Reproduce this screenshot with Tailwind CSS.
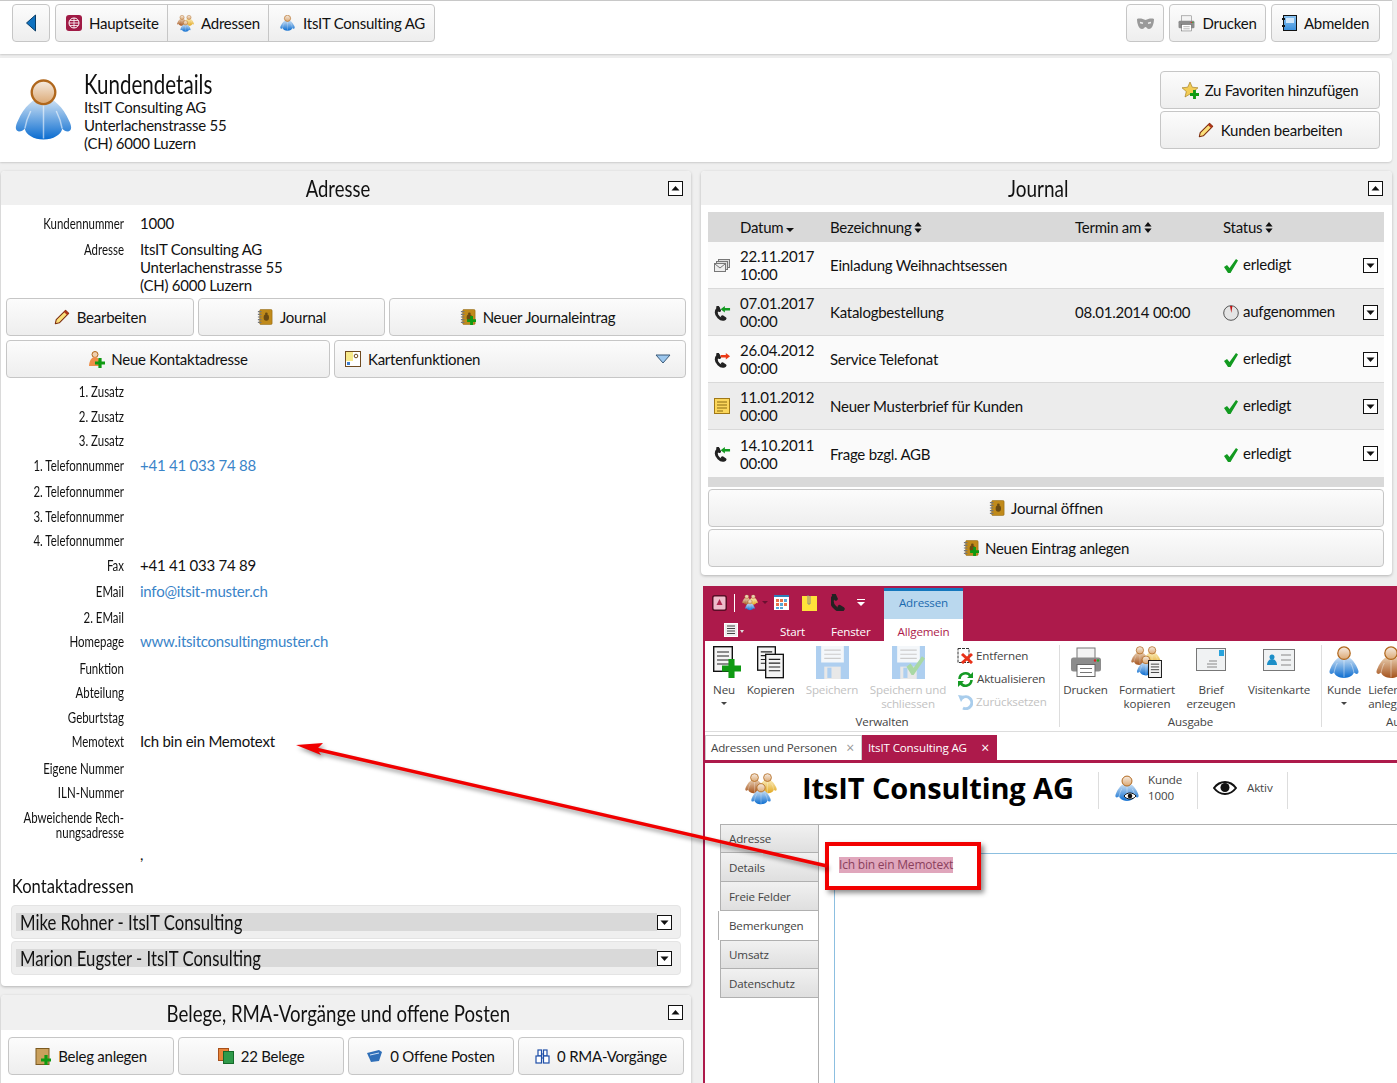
<!DOCTYPE html>
<html lang="de">
<head>
<meta charset="utf-8">
<title>Kundendetails</title>
<script src="https://cdn.jsdelivr.net/npm/@tailwindcss/browser@4"></script>
</head>
<body class="relative w-[1397px] h-[1083px] overflow-hidden bg-[#efefef] text-[#111] text-[15px] leading-[18px] tracking-[-0.24px] [font-family:Lato,'Liberation_Sans',sans-serif]">

<svg class="absolute w-0 h-0" aria-hidden="true">
  <defs>
    <linearGradient id="gBlue" x1="0" y1="0" x2="0" y2="1"><stop offset="0" stop-color="#d9e8f6"/><stop offset="1" stop-color="#0a6cd0"/></linearGradient>
    <linearGradient id="gBrown" x1="0" y1="0" x2="0" y2="1"><stop offset="0" stop-color="#ecd5b8"/><stop offset="1" stop-color="#a4521c"/></linearGradient>
    <linearGradient id="gYellow" x1="0" y1="0" x2="0" y2="1"><stop offset="0" stop-color="#fbeec0"/><stop offset="1" stop-color="#e2a820"/></linearGradient>
    <linearGradient id="gHead" x1="0" y1="0" x2="0" y2="1"><stop offset="0" stop-color="#f6ece2"/><stop offset="1" stop-color="#dba873"/></linearGradient>
    <linearGradient id="gDoor" x1="0" y1="0" x2="0" y2="1"><stop offset="0" stop-color="#8cc4f2"/><stop offset="1" stop-color="#3a8fdc"/></linearGradient>
    <symbol id="person" viewBox="-1 0 58 62">
      <path d="M28 18C38 18 48 28 54 42C57 48 57 52 53 53C50 53 48 51 47 50C46 56 38 61 28 61C18 61 10 56 9 50C8 51 6 53 3 53C-1 52-1 48 2 42C8 28 18 18 28 18Z"/>
      <path d="M28 26V60M15 32C12 38 10 44 9 50M41 32C44 38 46 44 47 50" fill="none" stroke="#fff" stroke-opacity=".55" stroke-width="1.5"/>
      <circle cx="28" cy="13" r="12" fill="url(#gHead)" stroke="#b0671c" stroke-width="2.4"/>
    </symbol>
    <symbol id="group" viewBox="0 0 32 32">
      <use href="#person" x="0" y="0" width="19" height="21" fill="url(#gBrown)"/>
      <use href="#person" x="13" y="0" width="19" height="21" fill="url(#gYellow)"/>
      <use href="#person" x="6" y="10" width="20" height="22" fill="url(#gBlue)"/>
    </symbol>
    <symbol id="plus" viewBox="0 0 10 10"><path d="M3.4 0h3.2v3.4H10v3.2H6.6V10H3.4V6.6H0V3.4h3.4z" fill="#0f9a12"/></symbol>
    <symbol id="book" viewBox="0 0 18 18">
      <rect x="3" y="0.5" width="14" height="17" rx="1.5" fill="#c08a1a" stroke="#8e6410" stroke-width=".6"/>
      <path d="M1 3h4M1 6h4M1 9h4M1 12h4M1 15h4" stroke="#777" stroke-width="1.4"/>
      <ellipse cx="10.5" cy="9.5" rx="3" ry="3.6" fill="#6a4a12"/><circle cx="10.5" cy="5.4" r="1.5" fill="#6a4a12"/>
    </symbol>
    <symbol id="bookplus" viewBox="0 0 18 18"><use href="#book" width="18" height="18"/><use href="#plus" x="8" y="8" width="10" height="10"/></symbol>
    <symbol id="pencil" viewBox="0 0 18 18">
      <path d="M13 1.5l3.5 3.5L6 15.5 1.5 16.5 2.5 12z" fill="#fbe07a" stroke="#7c2c0c" stroke-width="1.2" stroke-linejoin="round"/>
      <path d="M13 1.5l3.5 3.5-1.8 1.8-3.5-3.5z" fill="#b2351a"/>
    </symbol>
    <symbol id="check" viewBox="0 0 16 16"><path d="M1 9l3-2 2.5 3L13 1l2 1.5L7.5 15H5z" fill="#129a20"/></symbol>
    <symbol id="phone" viewBox="0 0 18 18"><path d="M5 2.500C2 6 2 10 5.500 13.500 8 16 10 17 12.500 15.500" fill="none" stroke="#222" stroke-width="3.400" stroke-linecap="round"/><path d="M4.500 1.500l2 4M10 13l3 2" stroke="#222" stroke-width="3.600" stroke-linecap="round"/></symbol>
    <symbol id="phonein" viewBox="0 0 18 18"><use href="#phone" width="16" height="16" y="2"/><path d="M7 5.500l4.500-3.500v2.200H17v2.600h-5.500V9z" fill="#129a20"/></symbol>
    <symbol id="phoneout" viewBox="0 0 18 18"><use href="#phone" width="16" height="16" y="2"/><path d="M17 5.500L12.500 2v2.200H7v2.600h5.500V9z" fill="#ec3a16"/></symbol>
    <symbol id="printer" viewBox="0 0 32 32">
      <rect x="7" y="1.5" width="18" height="11" fill="#f4f4f4" stroke="#777"/>
      <rect x="1" y="11" width="30" height="14" rx="2.5" fill="#8c8c8c"/>
      <rect x="7" y="18" width="18" height="12" fill="#fff" stroke="#666"/>
      <path d="M10 22h12M10 26h12" stroke="#777"/>
      <circle cx="25" cy="14" r="1.2" fill="#d22"/><circle cx="28" cy="14" r="1.2" fill="#2a2"/>
    </symbol>
    <symbol id="doc" viewBox="0 0 20 26">
      <rect x=".7" y=".7" width="18.6" height="24.6" fill="#f4f4f4" stroke="#111" stroke-width="1.4"/>
      <path d="M4 6h12M4 10h12M4 14h12M4 18h12" stroke="#222" stroke-width="1.2"/>
    </symbol>
    <symbol id="floppy" viewBox="0 0 32 32">
      <path d="M0 0h32v32H0z" fill="#aecff0"/><rect x="5" y="0" width="22" height="16" fill="#f4f7fa"/>
      <path d="M8 4h16M8 8h16M8 12h16" stroke="#ccc"/><rect x="8" y="20" width="16" height="12" fill="#e8e8e8"/><rect x="11" y="21" width="4" height="10" fill="#aecff0"/>
    </symbol>
    <symbol id="tri-up" viewBox="0 0 15 15"><rect x=".5" y=".5" width="14" height="14" fill="#fff" stroke="#111"/><path d="M3.5 9.5L7.5 5l4 4.5z" fill="#111"/></symbol>
    <symbol id="tri-dn" viewBox="0 0 15 15"><rect x=".5" y=".5" width="14" height="14" fill="#fff" stroke="#111"/><path d="M3.5 5.5L7.5 10l4-4.5z" fill="#111"/></symbol>
    <symbol id="sort" viewBox="0 0 8 11"><path d="M4 0l3.600 4.400H.4zM4 11L.4 6.600h7.200z" fill="#111"/></symbol>
  </defs>
</svg>

<!-- top bar -->
<header class="h-[54px] w-[1392px] bg-white border-t border-[#c8c8c8] rounded-br-[4px] shadow-[0_1px_2px_rgba(0,0,0,.15)] flex items-start pt-[3px] pl-[12px] pr-[12px]">
  <button class="w-[38px] h-[38px] flex items-center justify-center border border-[#c6c6c6] rounded-[4px] bg-linear-to-b from-[#fcfcfc] to-[#eeeeee]">
    <svg class="w-[12px] h-[18px]" viewBox="0 0 12 18"><path d="M10.500 1L1.500 9l9 8z" fill="#0f72c0" stroke="#0a3d66"/></svg>
  </button>
  <nav class="ml-[5px] h-[38px] flex border border-[#c6c6c6] rounded-[4px] bg-linear-to-b from-[#fcfcfc] to-[#eeeeee]">
    <a class="w-[112px] flex items-center pl-[10px] gap-[7px] border-r border-[#c6c6c6]">
      <svg class="w-[16px] h-[16px]" viewBox="0 0 16 16"><rect width="16" height="16" rx="3" fill="#a01a45"/><circle cx="8" cy="8" r="5" fill="none" stroke="#fff"/><path d="M3 8h10M8 3v10M4 5.500h8M4 10.500h8" stroke="#fff" stroke-width=".8"/></svg>
      Hauptseite
    </a>
    <a class="w-[101px] flex items-center pl-[9px] gap-[7px] border-r border-[#c6c6c6]">
      <svg class="w-[17px] h-[17px]"><use href="#group"/></svg>
      Adressen
    </a>
    <a class="w-[165px] flex items-center pl-[11px] gap-[8px]">
      <svg class="w-[15px] h-[16px]" fill="url(#gBlue)"><use href="#person"/></svg>
      ItsIT Consulting AG
    </a>
  </nav>
  <div class="ml-auto flex gap-[5px]">
    <button class="w-[38px] h-[38px] flex items-center justify-center border border-[#c6c6c6] rounded-[4px] bg-linear-to-b from-[#fcfcfc] to-[#eeeeee]">
      <svg class="w-[17px] h-[11px]" viewBox="0 0 17 11"><path d="M0 1c3-1 6 0 8.500 1 2.500-1 5.500-2 8.500-1 0 5-2 10-5 10-2 0-2.500-2-3.500-2S7 11 5 11C2 11 0 6 0 1z" fill="#9a9a9a"/><path d="M3 4.500l3 .8M14 4.500l-3 .8" stroke="#eee" stroke-width="1.400"/></svg>
    </button>
    <button class="w-[97px] h-[38px] flex items-center justify-center gap-[7px] border border-[#c6c6c6] rounded-[4px] bg-linear-to-b from-[#fcfcfc] to-[#eeeeee]">
      <svg class="w-[17px] h-[17px]"><use href="#printer"/></svg>Drucken
    </button>
    <button class="w-[109px] h-[38px] flex items-center justify-center gap-[7px] border border-[#c6c6c6] rounded-[4px] bg-linear-to-b from-[#fcfcfc] to-[#eeeeee]">
      <svg class="w-[15px] h-[16px]" viewBox="0 0 15 16"><rect x="1.500" y=".5" width="13" height="15" fill="url(#gDoor)" stroke="#111"/><rect x="4" y="3" width="8" height="5" fill="#cfe6fa"/><path d="M0 4h3M0 11h3" stroke="#111" stroke-width="2"/></svg>Abmelden
    </button>
  </div>
</header>

<!-- Kundendetails -->
<section class="mt-[4px] h-[104px] w-[1392px] bg-white rounded-r-[4px] shadow-[0_1px_2px_rgba(0,0,0,.15)] flex pl-[15px] pr-[12px]">
  <svg class="w-[57px] h-[62px] mt-[21px]" fill="url(#gBlue)"><use href="#person"/></svg>
  <div class="ml-[12px] mt-[13px]">
    <h1 class="text-[26px] leading-[27px] tracking-normal origin-left [transform:scaleX(.79)] whitespace-nowrap">Kundendetails</h1>
    <p>ItsIT Consulting AG</p>
    <p>Unterlachenstrasse 55</p>
    <p>(CH) 6000 Luzern</p>
  </div>
  <div class="ml-auto mt-[13px] flex flex-col gap-[2px]">
    <button class="w-[220px] h-[38px] flex items-center justify-center gap-[6px] border border-[#c6c6c6] rounded-[4px] bg-linear-to-b from-[#fcfcfc] to-[#eeeeee]">
      <svg class="w-[17px] h-[17px]" viewBox="0 0 17 17"><path d="M8 0l2.300 5.200 5.700.6-4.300 3.700 1.300 5.500L8 12.100 3 15l1.300-5.500L0 5.800l5.700-.6z" fill="#f2cc55" stroke="#9a7416" stroke-width=".6"/><use href="#plus" x="8" y="8" width="9" height="9"/></svg>
      Zu Favoriten hinzufügen
    </button>
    <button class="w-[220px] h-[38px] flex items-center justify-center gap-[7px] border border-[#c6c6c6] rounded-[4px] bg-linear-to-b from-[#fcfcfc] to-[#eeeeee]">
      <svg class="w-[16px] h-[16px]"><use href="#pencil"/></svg>
      Kunden bearbeiten
    </button>
  </div>
</section>

<!-- Panels -->
<main class="mt-[9px] flex gap-[10px] pl-[1px]">
  <!-- left column -->
  <div class="w-[690px] flex flex-col gap-[9px]">
    <section class="bg-white rounded-[4px] shadow-[0_1px_3px_rgba(0,0,0,.25)] pb-[11px]">
      <div class="relative h-[34px] bg-[#f0f0f0] flex items-center justify-center pr-[16px] rounded-t-[4px] text-[24px] tracking-normal">
        <span class="[transform:scaleX(.77)]">Adresse</span>
        <svg class="absolute right-[8px] top-[10px] w-[15px] h-[15px]"><use href="#tri-up"/></svg>
      </div>
      <dl class="pt-[10px] [&_dt]:w-[123px] [&_dt]:text-right [&_dt]:text-[14.500px] [&_dt]:tracking-normal [&_dt]:whitespace-nowrap [&_dt]:origin-right [&_dt]:[transform:scaleX(.79)] [&_dd]:ml-[16px] [&_dd]:-mt-[1px]">
        <div class="flex h-[26px]"><dt>Kundennummer</dt><dd>1000</dd></div>
        <div class="flex h-[57px]"><dt>Adresse</dt><dd>ItsIT Consulting AG<br>Unterlachenstrasse 55<br>(CH) 6000 Luzern</dd></div>
      </dl>
      <div class="px-[5px] flex gap-[4px]">
        <button class="w-[188px] h-[38px] flex items-center justify-center gap-[7px] border border-[#c6c6c6] rounded-[4px] bg-linear-to-b from-[#fcfcfc] to-[#eeeeee]"><svg class="w-[16px] h-[16px]"><use href="#pencil"/></svg>Bearbeiten</button>
        <button class="w-[187px] h-[38px] flex items-center justify-center gap-[7px] border border-[#c6c6c6] rounded-[4px] bg-linear-to-b from-[#fcfcfc] to-[#eeeeee]"><svg class="w-[16px] h-[16px]"><use href="#book"/></svg>Journal</button>
        <button class="w-[297px] h-[38px] flex items-center justify-center gap-[7px] border border-[#c6c6c6] rounded-[4px] bg-linear-to-b from-[#fcfcfc] to-[#eeeeee]"><svg class="w-[16px] h-[16px]"><use href="#bookplus"/></svg>Neuer Journaleintrag</button>
      </div>
      <div class="mt-[4px] px-[5px] flex gap-[4px]">
        <button class="w-[324px] h-[38px] flex items-center justify-center gap-[6px] border border-[#c6c6c6] rounded-[4px] bg-linear-to-b from-[#fcfcfc] to-[#eeeeee]">
          <svg class="w-[17px] h-[17px]" viewBox="0 0 17 17"><circle cx="7" cy="3.500" r="3" fill="#f0d0b0" stroke="#b0671c"/><path d="M7 6c4 0 5 5 5 9H1c0-4 2-9 6-9z" fill="#ef8f4a"/><use href="#plus" x="7" y="7" width="10" height="10"/></svg>
          Neue Kontaktadresse
        </button>
        <button class="w-[352px] h-[38px] flex items-center pl-[10px] pr-[14px] gap-[7px] border border-[#c6c6c6] rounded-[4px] bg-linear-to-b from-[#fcfcfc] to-[#eeeeee]">
          <svg class="w-[16px] h-[16px]" viewBox="0 0 16 16"><rect x=".5" y=".5" width="15" height="15" fill="#fff" stroke="#6e4a20"/><path d="M1 1h7v9H1z" fill="#f7e98a"/><rect x="2" y="11" width="3" height="3" fill="#3f7fd0"/><circle cx="11" cy="5" r="1.800" fill="none" stroke="#6e4a20"/></svg>
          Kartenfunktionen
          <svg class="ml-auto w-[16px] h-[10px]" viewBox="0 0 16 10"><path d="M1 1h14L8 9z" fill="#9cc7ee" stroke="#3a5a78"/></svg>
        </button>
      </div>
      <dl class="mt-[5px] [&_dt]:w-[123px] [&_dt]:shrink-0 [&_dt]:text-right [&_dt]:text-[14.500px] [&_dt]:tracking-normal [&_dt]:whitespace-nowrap [&_dt]:origin-right [&_dt]:[transform:scaleX(.79)] [&_dd]:ml-[16px] [&_dd]:-mt-[1px]">
        <div class="flex h-[25px]"><dt>1. Zusatz</dt></div>
        <div class="flex h-[24px]"><dt>2. Zusatz</dt></div>
        <div class="flex h-[25px]"><dt>3. Zusatz</dt></div>
        <div class="flex h-[26px]"><dt>1. Telefonnummer</dt><dd class="text-[#3a84c8]">+41 41 033 74 88</dd></div>
        <div class="flex h-[25px]"><dt>2. Telefonnummer</dt></div>
        <div class="flex h-[24px]"><dt>3. Telefonnummer</dt></div>
        <div class="flex h-[25px]"><dt>4. Telefonnummer</dt></div>
        <div class="flex h-[26px]"><dt>Fax</dt><dd>+41 41 033 74 89</dd></div>
        <div class="flex h-[26px]"><dt>EMail</dt><dd class="text-[#3a84c8]">info@itsit-muster.ch</dd></div>
        <div class="flex h-[24px]"><dt>2. EMail</dt></div>
        <div class="flex h-[27px]"><dt>Homepage</dt><dd class="text-[#3a84c8]">www.itsitconsultingmuster.ch</dd></div>
        <div class="flex h-[24px]"><dt>Funktion</dt></div>
        <div class="flex h-[25px]"><dt>Abteilung</dt></div>
        <div class="flex h-[24px]"><dt>Geburtstag</dt></div>
        <div class="flex h-[27px]"><dt>Memotext</dt><dd>Ich bin ein Memotext</dd></div>
        <div class="flex h-[24px]"><dt>Eigene Nummer</dt></div>
        <div class="flex h-[25px]"><dt>ILN-Nummer</dt></div>
        <div class="flex h-[39px] leading-[15px] pt-[1px]"><dt><span class="block w-[132px] -ml-[9px]">Abweichende Rech-<br>nungsadresse</span></dt></div>
        <div class="flex h-[26px]"><dt></dt><dd class="-translate-y-[2px]">,</dd></div>
      </dl>
      <h2 class="h-[31px] pl-[13px] text-[20px] leading-[22px] tracking-normal origin-left [transform:scaleX(.83)] whitespace-nowrap">Kontaktadressen</h2>
      <div class="mx-[10px] h-[34px] bg-[#efefef] rounded-[4px] border border-[#e4e4e4] flex items-center pl-[4px] pr-[8px] text-[22px] tracking-normal">
        <span class="flex-1 h-[18px] bg-[#d9d9d9] pl-[4px] leading-[18px]"><span class="inline-block origin-left [transform:scaleX(.76)] whitespace-nowrap">Mike Rohner - ItsIT Consulting</span></span>
        <svg class="w-[15px] h-[15px]"><use href="#tri-dn"/></svg>
      </div>
      <div class="mt-[2px] mx-[10px] h-[34px] bg-[#efefef] rounded-[4px] border border-[#e4e4e4] flex items-center pl-[4px] pr-[8px] text-[22px] tracking-normal">
        <span class="flex-1 h-[18px] bg-[#d9d9d9] pl-[4px] leading-[18px]"><span class="inline-block origin-left [transform:scaleX(.76)] whitespace-nowrap">Marion Eugster - ItsIT Consulting</span></span>
        <svg class="w-[15px] h-[15px]"><use href="#tri-dn"/></svg>
      </div>
    </section>
    <section class="bg-white rounded-[4px] shadow-[0_1px_3px_rgba(0,0,0,.25)] h-[100px]">
      <div class="relative h-[35px] bg-[#f0f0f0] flex items-center justify-center pr-[16px] rounded-t-[4px] text-[24px] tracking-normal">
        <span class="[transform:scaleX(.776)] whitespace-nowrap">Belege, RMA-Vorgänge und offene Posten</span>
        <svg class="absolute right-[8px] top-[10px] w-[15px] h-[15px]"><use href="#tri-up"/></svg>
      </div>
      <div class="mt-[7px] pl-[7px] flex gap-[4px]">
        <button class="w-[166px] h-[38px] flex items-center justify-center gap-[7px] border border-[#c6c6c6] rounded-[4px] bg-linear-to-b from-[#fcfcfc] to-[#eeeeee]">
          <svg class="w-[16px] h-[17px]" viewBox="0 0 16 17"><rect x="1" y=".5" width="13" height="16" fill="#c9a05c" stroke="#7c5a20"/><use href="#plus" x="6" y="7" width="10" height="10"/></svg>Beleg anlegen
        </button>
        <button class="w-[166px] h-[38px] flex items-center justify-center gap-[7px] border border-[#c6c6c6] rounded-[4px] bg-linear-to-b from-[#fcfcfc] to-[#eeeeee]">
          <svg class="w-[16px] h-[16px]" viewBox="0 0 16 16"><rect x=".5" y=".5" width="10" height="12" fill="#e8853a" stroke="#a8501a"/><rect x="5.500" y="3.500" width="10" height="12" fill="#2f9a4a" stroke="#156a2a"/></svg>22 Belege
        </button>
        <button class="w-[166px] h-[38px] flex items-center justify-center gap-[7px] border border-[#c6c6c6] rounded-[4px] bg-linear-to-b from-[#fcfcfc] to-[#eeeeee]">
          <svg class="w-[16px] h-[12px]" viewBox="0 0 16 12"><path d="M0 3l12-3 3 2-3 9-8 1z" fill="#2f6fb8"/><path d="M3 5l9-2" stroke="#cfe2f6"/></svg>0 Offene Posten
        </button>
        <button class="w-[166px] h-[38px] flex items-center justify-center gap-[7px] border border-[#c6c6c6] rounded-[4px] bg-linear-to-b from-[#fcfcfc] to-[#eeeeee]">
          <svg class="w-[15px] h-[15px]" viewBox="0 0 15 15" fill="#fff" stroke="#1f4fa8" stroke-width="1.200"><rect x="3" y="1" width="3.500" height="6"/><rect x="8.500" y="1" width="3.500" height="6"/><rect x="1" y="7" width="5.500" height="7"/><rect x="8.500" y="7" width="5.500" height="7"/><path d="M6.500 5h2M6.500 9h2"/></svg>0 RMA-Vorgänge
        </button>
      </div>
    </section>
  </div>

  <!-- right column -->
  <div class="w-[691px] shrink-0">
    <section class="h-[404px] bg-white rounded-[4px] shadow-[0_1px_3px_rgba(0,0,0,.25)]">
      <div class="relative h-[34px] bg-[#f0f0f0] flex items-center justify-center pr-[16px] rounded-t-[4px] text-[24px] tracking-normal">
        <span class="[transform:scaleX(.79)]">Journal</span>
        <svg class="absolute right-[9px] top-[10px] w-[15px] h-[15px]"><use href="#tri-up"/></svg>
      </div>
      <div class="ml-[7px] mt-[7px] w-[676px] bg-[#d9d9d9]">
        <div class="grid grid-cols-[32px_90px_245px_148px_140px_21px] h-[30px] items-center">
          <span></span>
          <span class="flex items-center gap-[3px]">Datum<svg class="w-[8px] h-[4px] mt-[5px]" viewBox="0 0 8 4"><path d="M0 0h8L4 4z" fill="#111"/></svg></span>
          <span class="flex items-center gap-[3px]">Bezeichnung<svg class="w-[8px] h-[11px]"><use href="#sort"/></svg></span>
          <span class="flex items-center gap-[3px]">Termin am<svg class="w-[8px] h-[11px]"><use href="#sort"/></svg></span>
          <span class="flex items-center gap-[3px]">Status<svg class="w-[8px] h-[11px]"><use href="#sort"/></svg></span>
          <span></span>
        </div>
        <div class="grid grid-cols-[32px_90px_245px_148px_140px_21px] h-[47px] items-center bg-[#fafafa] border-b border-[#d9d9d9]">
          <svg class="ml-[6px] w-[16px] h-[13px]" viewBox="0 0 16 13"><rect x="4.500" y=".5" width="11" height="8" fill="#ddd" stroke="#777"/><rect x="2.500" y="2.500" width="11" height="8" fill="#ddd" stroke="#777"/><rect x=".5" y="4.500" width="11" height="8" fill="#eee" stroke="#777"/><path d="M1 5l5 4 5-4" fill="none" stroke="#777"/></svg>
          <span>22.11.2017<br>10:00</span><span>Einladung Weihnachtsessen</span><span></span>
          <span class="flex items-center gap-[4px] -mt-[2px]"><svg class="w-[16px] h-[16px] mt-[4px]"><use href="#check"/></svg>erledigt</span>
          <svg class="w-[15px] h-[15px]"><use href="#tri-dn"/></svg>
        </div>
        <div class="grid grid-cols-[32px_90px_245px_148px_140px_21px] h-[47px] items-center bg-[#ececec] border-b border-[#d9d9d9]">
          <svg class="ml-[6px] w-[17px] h-[17px]"><use href="#phonein"/></svg>
          <span>07.01.2017<br>00:00</span><span>Katalogbestellung</span><span>08.01.2014 00:00</span>
          <span class="flex items-center gap-[4px] -mt-[2px]"><svg class="w-[16px] h-[16px] mt-[4px]" viewBox="0 0 16 16"><circle cx="8" cy="8" r="7.300" fill="#e4e4e4" stroke="#555"/><path d="M7 1h2.400L8.300 8z" fill="#c01414"/></svg>aufgenommen</span>
          <svg class="w-[15px] h-[15px]"><use href="#tri-dn"/></svg>
        </div>
        <div class="grid grid-cols-[32px_90px_245px_148px_140px_21px] h-[47px] items-center bg-[#fafafa] border-b border-[#d9d9d9]">
          <svg class="ml-[6px] w-[17px] h-[17px]"><use href="#phoneout"/></svg>
          <span>26.04.2012<br>00:00</span><span>Service Telefonat</span><span></span>
          <span class="flex items-center gap-[4px] -mt-[2px]"><svg class="w-[16px] h-[16px] mt-[4px]"><use href="#check"/></svg>erledigt</span>
          <svg class="w-[15px] h-[15px]"><use href="#tri-dn"/></svg>
        </div>
        <div class="grid grid-cols-[32px_90px_245px_148px_140px_21px] h-[47px] items-center bg-[#ececec] border-b border-[#d9d9d9]">
          <svg class="ml-[6px] w-[16px] h-[16px]" viewBox="0 0 16 16"><rect x=".5" y=".5" width="15" height="15" fill="#fbd65a" stroke="#a07818"/><path d="M3 4h10M3 7h10M3 10h10M3 13h6" stroke="#8a6a10"/></svg>
          <span>11.01.2012<br>00:00</span><span>Neuer Musterbrief für Kunden</span><span></span>
          <span class="flex items-center gap-[4px] -mt-[2px]"><svg class="w-[16px] h-[16px] mt-[4px]"><use href="#check"/></svg>erledigt</span>
          <svg class="w-[15px] h-[15px]"><use href="#tri-dn"/></svg>
        </div>
        <div class="grid grid-cols-[32px_90px_245px_148px_140px_21px] h-[47px] items-center bg-[#fafafa]">
          <svg class="ml-[6px] w-[17px] h-[17px]"><use href="#phonein"/></svg>
          <span>14.10.2011<br>00:00</span><span>Frage bzgl. AGB</span><span></span>
          <span class="flex items-center gap-[4px] -mt-[2px]"><svg class="w-[16px] h-[16px] mt-[4px]"><use href="#check"/></svg>erledigt</span>
          <svg class="w-[15px] h-[15px]"><use href="#tri-dn"/></svg>
        </div>
        <div class="h-[10px]"></div>
      </div>
      <div class="ml-[7px] w-[676px] mt-[2px] flex flex-col gap-[2px]">
        <button class="h-[38px] flex items-center justify-center gap-[6px] border border-[#c6c6c6] rounded-[4px] bg-linear-to-b from-[#fcfcfc] to-[#eeeeee]"><svg class="w-[16px] h-[16px]"><use href="#book"/></svg>Journal öffnen</button>
        <button class="h-[38px] flex items-center justify-center gap-[6px] border border-[#c6c6c6] rounded-[4px] bg-linear-to-b from-[#fcfcfc] to-[#eeeeee]"><svg class="w-[16px] h-[16px]"><use href="#bookplus"/></svg>Neuen Eintrag anlegen</button>
      </div>
    </section>

    <!-- embedded application screenshot -->
    <figure class="mt-[11px] ml-[2px] w-[694px] h-[497px] overflow-hidden bg-white border-l-2 border-[#ad1a4b] flex flex-col text-[#444] text-[11.600px] leading-[14px] [font-family:'Open_Sans',sans-serif] tracking-[-0.15px]">
      <div class="h-[55px] bg-[#ad1a4b] flex shrink-0 -ml-[2px]">
        <div class="w-[181px] flex flex-col">
          <div class="h-[33px] flex items-center pl-[9px]">
            <svg class="w-[15px] h-[16px]" viewBox="0 0 15 16"><rect x=".75" y=".75" width="13.500" height="14.500" rx="2" fill="#eebccb" stroke="#5a0c26" stroke-width="1.500"/><path d="M7.500 4l3 6h-6z" fill="#b0284f"/></svg>
            <span class="ml-[7px] w-px h-[18px] bg-white"></span>
            <svg class="ml-[7px] w-[16px] h-[17px]"><use href="#group"/></svg>
            <svg class="ml-[4px] w-[6px] h-[3px]" viewBox="0 0 6 3"><path d="M0 0h6L3 3z" fill="#6a1030"/></svg>
            <svg class="ml-[6px] w-[15px] h-[15px]" viewBox="0 0 15 15"><rect width="15" height="15" fill="#fff"/><rect y="0" width="15" height="2" fill="#2d7fb8"/><path d="M2 4h3v3H2zM6 4h3v3H6zM2 8h3v3H2zM10 8h3v3h-3z" fill="#e8734a"/><path d="M10 4h3v3h-3zM6 8h3v3H6zM2 12h3v2H2zM6 12h3v2H6z" fill="#5aa7d8"/></svg>
            <svg class="ml-[13px] w-[15px] h-[16px]" viewBox="0 0 15 16"><rect y="1" width="15" height="15" fill="#ffe23a"/><path d="M6 0v9h2V1" fill="none" stroke="#888"/></svg>
            <svg class="ml-[14px] w-[14px] h-[17px]" viewBox="2 1 13 16"><use href="#phone" width="18" height="18"/></svg>
            <svg class="ml-[12px] w-[8px] h-[7px]" viewBox="0 0 8 7"><path d="M0 0h8v1H0zM0 3h8L4 7z" fill="#fff"/></svg>
          </div>
          <div class="h-[22px] flex items-center text-white pt-[3px]">
            <svg class="ml-[21px] w-[14px] h-[14px] -mt-[3px]" viewBox="0 0 14 14"><rect x=".5" y=".5" width="13" height="13" fill="#eee" stroke="#fff"/><path d="M3 3h8M3 5.500h8M3 8h8M3 10.500h8" stroke="#444"/></svg>
            <svg class="ml-[2px] w-[4px] h-[3px]" viewBox="0 0 4 3"><path d="M0 0h4L2 3z" fill="#ddd"/></svg>
            <span class="ml-[36px]">Start</span>
            <span class="ml-[26px]">Fenster</span>
          </div>
        </div>
        <div class="w-[79px] flex flex-col">
          <div class="mt-[2px] h-[31px] bg-[#bad8ee] border-t-[3px] border-[#1477bd] flex items-center justify-center pb-[4px] text-[#1a6aae]">Adressen</div>
          <div class="h-[22px] bg-white flex items-center justify-center pt-[3px] text-[#ad1a4b]">Allgemein</div>
        </div>
      </div>

      <div class="h-[91px] shrink-0 flex border-b border-[#ddd]">
        <div class="w-[354px] shrink-0 flex flex-col">
          <div class="h-[74px] shrink-0 flex">
            <div class="w-[48px] pt-[5px] flex flex-col items-center -ml-[5px]">
              <svg class="ml-[5px] w-[28px] h-[33px]" viewBox="0 0 28 33"><use href="#doc" width="20" height="26"/><use href="#plus" x="9" y="13" width="19" height="19"/></svg>
              <span class="mt-[4px]">Neu</span>
              <svg class="mt-[5px] w-[6px] h-[3px]" viewBox="0 0 6 3"><path d="M0 0h6L3 3z" fill="#444"/></svg>
            </div>
            <div class="w-[45px] pt-[5px] flex flex-col items-center">
              <svg class="w-[27px] h-[33px]" viewBox="0 0 27 33"><use href="#doc" width="19" height="25"/><use href="#doc" x="8" y="7" width="19" height="26"/></svg>
              <span class="mt-[4px]">Kopieren</span>
            </div>
            <div class="ml-[10px] w-[58px] pt-[5px] flex flex-col items-center text-[#c2c2c2]">
              <svg class="w-[33px] h-[33px]"><use href="#floppy"/></svg>
              <span class="mt-[4px]">Speichern</span>
            </div>
            <div class="ml-[7px] w-[80px] pt-[5px] flex flex-col items-center text-center text-[#c2c2c2]">
              <svg class="w-[33px] h-[33px]" viewBox="0 0 32 32"><use href="#floppy" width="32" height="32"/><path d="M14 20l4-3 3 4 8-11 3 2-11 16h-2z" fill="#a9d8a4"/></svg>
              <span class="mt-[4px]">Speichern und schliessen</span>
            </div>
            <div class="ml-[9px] flex flex-col pt-[7px] gap-[7px]">
              <span class="flex items-center gap-[3px] h-[16px]"><svg class="w-[16px] h-[16px]" viewBox="0 0 16 16"><rect x="1" y=".5" width="11" height="14" fill="#fff" stroke="#333" stroke-dasharray="3 1"/><path d="M5 6l10 9M15 6L5 15" stroke="#e8321a" stroke-width="3"/></svg>Entfernen</span>
              <span class="flex items-center gap-[3px] h-[16px]"><svg class="w-[17px] h-[17px]" viewBox="0 0 17 17"><path d="M2.500 8a6 6 0 0 1 11-3M14.500 9a6 6 0 0 1-11 3" fill="none" stroke="#159a24" stroke-width="2.600"/><path d="M16 1v6h-6zM1 16v-6h6z" fill="#159a24"/></svg>Aktualisieren</span>
              <span class="flex items-center gap-[3px] h-[16px] text-[#c2c2c2]"><svg class="w-[16px] h-[16px]" viewBox="0 0 16 16"><path d="M5 4a6 6 0 1 1 1 10" fill="none" stroke="#a9cdec" stroke-width="3"/><path d="M1 1l7 1-4 6z" fill="#a9cdec"/></svg>Zurücksetzen</span>
            </div>
          </div>
          <div class="text-center">Verwalten</div>
        </div>
        <div class="w-[262px] border-l border-[#ddd] my-[4px] flex flex-col shrink-0">
          <div class="h-[70px] shrink-0 flex">
            <div class="ml-[3px] w-[45px] pt-[1px] flex flex-col items-center"><svg class="w-[32px] h-[33px]"><use href="#printer"/></svg><span class="mt-[4px]">Drucken</span></div>
            <div class="ml-[11px] w-[56px] pt-[1px] flex flex-col items-center text-center">
              <svg class="w-[32px] h-[33px]" viewBox="0 0 32 33"><use href="#group" width="30" height="30"/><use href="#doc" x="17" y="14" width="14" height="18"/></svg>
              <span class="mt-[4px]">Formatiert kopieren</span>
            </div>
            <div class="ml-[11px] w-[50px] pt-[1px] flex flex-col items-center text-center">
              <svg class="w-[30px] h-[33px]" viewBox="0 0 30 33"><rect x=".5" y="2.500" width="29" height="22" fill="#f0f2f3" stroke="#777"/><rect x="23" y="4" width="5" height="6" fill="#29a3dc"/><path d="M13 15h8M11 18h10M11 21h10" stroke="#888"/></svg>
              <span class="mt-[4px]">Brief erzeugen</span>
            </div>
            <div class="ml-[11px] w-[64px] pt-[1px] flex flex-col items-center">
              <svg class="w-[32px] h-[33px]" viewBox="0 0 32 33"><rect x=".5" y="3.500" width="31" height="21" fill="#f0f2f3" stroke="#777"/><circle cx="9" cy="11" r="2.500" fill="#1d8fc8"/><path d="M9 13c3 0 5 3 5 6H4c0-3 2-6 5-6z" fill="#1d8fc8"/><path d="M18 9h10M18 14h10M18 19h10" stroke="#888"/></svg>
              <span class="mt-[4px]">Visitenkarte</span>
            </div>
          </div>
          <div class="text-center">Ausgabe</div>
        </div>
        <div class="w-[80px] border-l border-[#ddd] my-[4px] flex flex-col shrink-0">
          <div class="h-[70px] shrink-0 flex">
            <div class="ml-[5px] w-[36px] pt-[1px] flex flex-col items-center"><svg class="w-[30px] h-[33px]" fill="url(#gBlue)"><use href="#person"/></svg><span class="mt-[4px]">Kunde</span><svg class="mt-[5px] w-[6px] h-[3px]" viewBox="0 0 6 3"><path d="M0 0h6L3 3z" fill="#444"/></svg></div>
            <div class="ml-[7px] pt-[1px] flex flex-col"><svg class="ml-[8px] w-[30px] h-[33px]" fill="url(#gBrown)"><use href="#person"/></svg><span class="mt-[4px] whitespace-nowrap">Lieferant<br>anlegen</span></div>
          </div>
          <div class="pl-[64px]">Au</div>
        </div>
      </div>

      <div class="mt-[3px] h-[25px] shrink-0 flex">
        <div class="w-[157px] border border-[#ccc] border-b-0 bg-white flex items-center justify-between pl-[5px] pr-[7px]">Adressen und Personen<span class="text-[#999] text-[14px]">×</span></div>
        <div class="w-[135px] bg-[#ad1a4b] text-white flex items-center justify-between pl-[6px] pr-[8px]">ItsIT Consulting AG<span class="text-[14px]">×</span></div>
      </div>
      <div class="h-[3px] shrink-0 bg-[#ad1a4b]"></div>

      <div class="h-[61px] shrink-0 flex items-start pt-[9px]">
        <svg class="ml-[40px] mt-[1px] w-[32px] h-[32px]"><use href="#group"/></svg>
        <strong class="ml-[25px] mt-[-2px] w-[296px] text-[29px] leading-[36px] text-black font-bold tracking-[-0.1px] whitespace-nowrap">ItsIT Consulting AG</strong>
        <div class="h-[37px] w-[99px] border-l border-[#ddd] flex items-center pl-[16px] gap-[10px]">
          <svg class="w-[24px] h-[28px] -translate-y-[2px]" viewBox="0 0 24 28"><use href="#person" width="24" height="27" fill="url(#gBlue)"/><path d="M9 21c3-4 9-4 12 0-3 4-9 4-12 0z" fill="#fff" stroke="#111"/><circle cx="15" cy="21" r="2.300" fill="#111"/></svg>
          <span class="leading-[16px] -translate-y-[3px] -translate-x-[1px]">Kunde<br>1000</span>
        </div>
        <div class="h-[37px] w-[91px] border-x border-[#ddd] flex items-center pl-[15px] gap-[10px]">
          <svg class="w-[24px] h-[14px] -translate-y-[3px]" viewBox="0 0 24 14"><path d="M1 7c6-8 16-8 22 0-6 8-16 8-22 0z" fill="#fff" stroke="#111" stroke-width="2"/><circle cx="12" cy="6.500" r="4.500" fill="#111"/></svg>
          <span class="-translate-y-[3px]">Aktiv</span>
        </div>
      </div>

      <div class="relative flex-1 flex pl-[15px]">
        <div class="w-[98px] shrink-0 flex flex-col">
          <div class="h-[29px] flex items-center pl-[8px] border border-r-0 border-[#b0b0b0] bg-linear-to-b from-[#f1f1f1] to-[#dfdfdf]">Adresse</div>
          <div class="h-[29px] flex items-center pl-[8px] pt-[1px] border border-t-0 border-r-0 border-[#b0b0b0] bg-linear-to-b from-[#f1f1f1] to-[#dfdfdf]">Details</div>
          <div class="h-[29px] flex items-center pl-[8px] pt-[1px] border border-t-0 border-r-0 border-[#b0b0b0] bg-linear-to-b from-[#f1f1f1] to-[#dfdfdf]">Freie Felder</div>
          <div class="h-[29px] -ml-[2px] flex items-center pl-[10px] border-l border-[#b0b0b0] bg-white">Bemerkungen</div>
          <div class="h-[29px] flex items-center pl-[8px] border border-r-0 border-[#b0b0b0] bg-linear-to-b from-[#f1f1f1] to-[#dfdfdf]">Umsatz</div>
          <div class="h-[29px] flex items-center pl-[8px] pt-[1px] border border-t-0 border-r-0 border-[#b0b0b0] bg-linear-to-b from-[#f1f1f1] to-[#dfdfdf]">Datenschutz</div>
        </div>
        <div class="flex-1 border-l border-t border-[#b0b0b0] pl-[15px] pt-[28px] flex flex-col">
          <div class="flex-1 border-l border-t border-[#8cbfe0]"></div>
        </div>
        <div class="absolute left-[120px] top-[18px] w-[156px] h-[48px] bg-white border-4 border-[#f20000] shadow-[3px_3px_5px_rgba(0,0,0,.45)] pl-[10px] pt-[11px]">
          <span class="inline-block bg-[#e0a6bc] text-[#8a3f5d] text-[12px] tracking-[-0.2px] h-[16px] leading-[16px]">Ich bin ein Memotext</span>
        </div>
      </div>
    </figure>
  </div>
</main>

<svg class="absolute left-0 top-0 w-[1397px] h-[1083px] pointer-events-none drop-shadow-[2px_3px_2px_rgba(0,0,0,.4)]" viewBox="0 0 1397 1083" aria-hidden="true">
  <path d="M827 866L315 749" stroke="#f00000" stroke-width="3.500" fill="none"/>
  <path d="M296 745L323 743 317 749 321 755z" fill="#f00000"/>
</svg>
</body>
</html>
